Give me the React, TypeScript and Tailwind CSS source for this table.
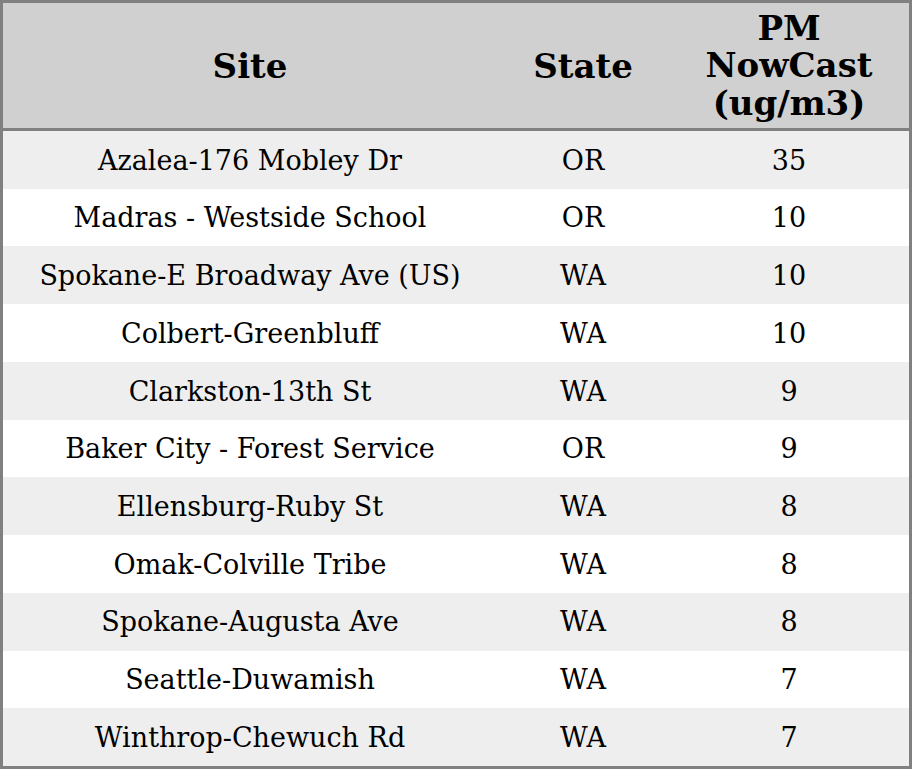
const rows: [string, string, number][] = [
  ["Azalea-176 Mobley Dr", "OR", 35],
  ["Madras - Westside School", "OR", 10],
  ["Spokane-E Broadway Ave (US)", "WA", 10],
  ["Colbert-Greenbluff", "WA", 10],
  ["Clarkston-13th St", "WA", 9],
  ["Baker City - Forest Service", "OR", 9],
  ["Ellensburg-Ruby St", "WA", 8],
  ["Omak-Colville Tribe", "WA", 8],
  ["Spokane-Augusta Ave", "WA", 8],
  ["Seattle-Duwamish", "WA", 7],
  ["Winthrop-Chewuch Rd", "WA", 7],
];

export default function App() {
  return (
    <div
      className="w-[912px] h-[769px] flex flex-col border-[3px] border-[#808080] bg-white text-black"
      style={{ fontFamily: '"DejaVu Serif", serif' }}
    >
      <div className="h-[128px] shrink-0 flex items-center bg-[#d0d0d0] border-b-[3px] border-[#808080] text-[34px] font-bold leading-[37.5px] text-center">
        <div className="w-[494px] pt-[2px]">Site</div>
        <div className="w-[172px] pt-[2px]">State</div>
        <div className="w-[240px] pt-[1px]">
          PM
          <br />
          NowCast
          <br />
          (ug/m3)
        </div>
      </div>
      {rows.map(([site, state, pm], i) => (
        <div
          key={site}
          className={`flex-1 flex items-center pt-[2px] text-center text-[27px] ${i % 2 === 0 ? "bg-[#eeeeee]" : "bg-white"}`}
        >
          <div className="w-[494px]">{site}</div>
          <div className="w-[172px]">{state}</div>
          <div className="w-[240px]">{pm}</div>
        </div>
      ))}
    </div>
  );
}
